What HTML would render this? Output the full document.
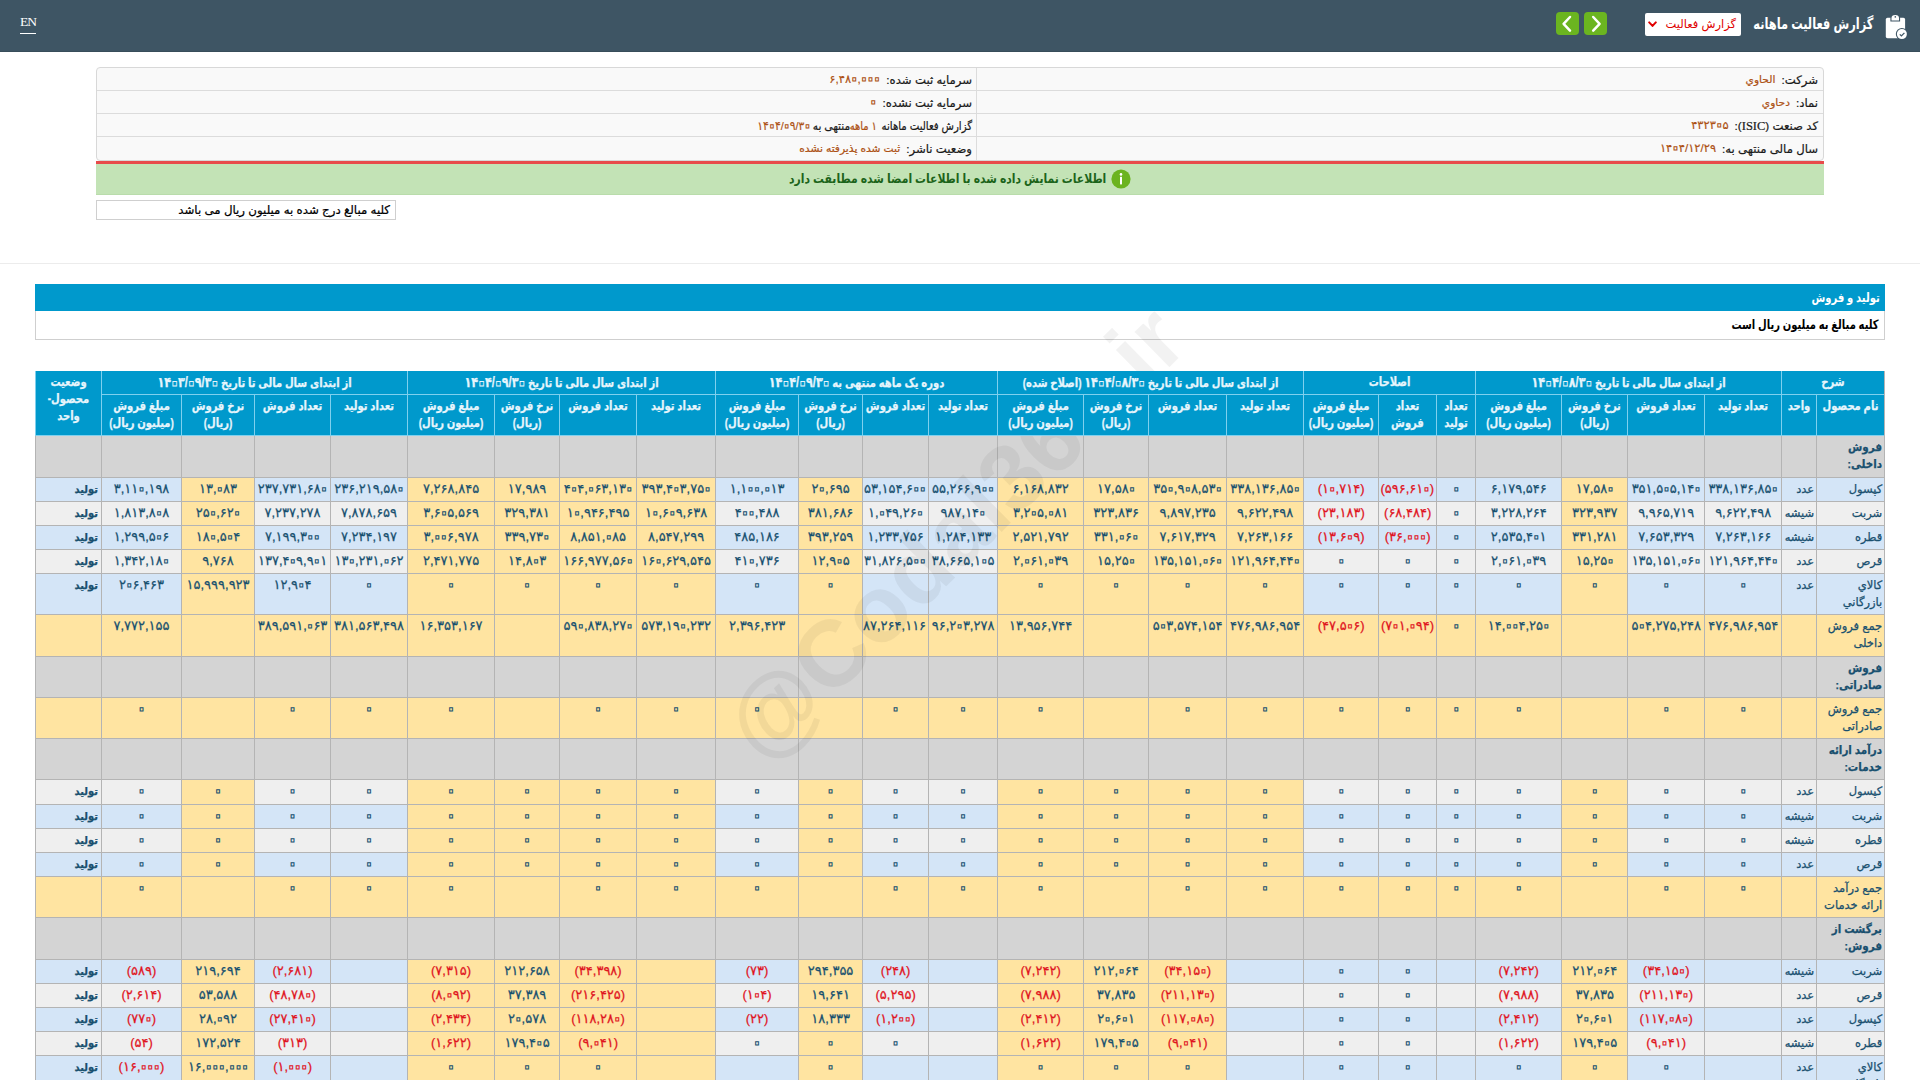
<!DOCTYPE html>
<html lang="fa">
<head>
<meta charset="utf-8">
<title>گزارش فعالیت ماهانه</title>
<style>
html,body{margin:0;padding:0;background:#fff;overflow:hidden;}
body{width:1920px;height:1080px;overflow:hidden;position:relative;font-family:"Liberation Sans","DejaVu Sans",sans-serif;font-size:11px;color:#000;}
.abs{position:absolute;}
#top{left:0;top:0;width:1920px;height:52px;background:#3e5564;border-bottom:1px solid #384d5a;box-sizing:border-box;}
#en{left:20px;top:13.5px;color:#fff;font-family:"Liberation Serif",serif;font-size:13.5px;line-height:15px;letter-spacing:-0.9px;}
#enl{left:20px;top:33px;width:16px;height:1px;background:#fff;}
#title{right:47px;top:13px;color:#fff;font-weight:bold;font-size:15.5px;line-height:22px;direction:rtl;white-space:nowrap;transform:scaleX(0.735);transform-origin:right center;}
#dd{left:1645px;top:13px;width:96px;height:23px;background:#fff;border-radius:2px;}
#ddt{right:5px;top:0;line-height:22px;color:#e00000;font-size:11.5px;direction:rtl;white-space:nowrap;}
.gb{top:12px;width:23px;height:23px;background:#6bb520;border-radius:4px;}
#info{left:96px;top:67px;width:1728px;height:94px;background:#f9f9f9;border:1px solid #d8d8d8;border-radius:4px;box-sizing:border-box;overflow:hidden;-webkit-text-stroke:0.2px;}
.ir{position:absolute;left:-1px;width:1728px;height:23px;border-bottom:1px solid #dcdcdc;box-sizing:border-box;}
.ic{position:absolute;top:0;height:22px;line-height:23px;color:#1a1a1a;direction:rtl;white-space:nowrap;font-size:11.7px;}
.ic b{font-weight:normal;color:#ad5215;margin-right:6px;font-size:11.5px;position:relative;top:-1px;}
.ic b.tx{font-size:10.7px;}
.ic i{font-style:normal;color:#ad5215;}
.p3{transform-origin:right center;}
#red{left:96px;top:161px;width:1728px;height:3px;background:#e84b4b;}
#green{left:96px;top:164px;width:1728px;height:31px;background:#c3e3b6;border-bottom:1px solid #b9dcab;box-sizing:border-box;}
#gt{right:718px;top:0;direction:rtl;line-height:29px;color:#1c641a;font-weight:bold;font-size:13px;transform:scaleX(0.832);white-space:nowrap;transform-origin:right center;}
#note{-webkit-text-stroke:0.2px;left:96px;top:200px;width:300px;height:20px;border:1px solid #cfcfcf;box-sizing:border-box;direction:rtl;text-align:right;padding-right:5px;line-height:19px;font-size:11.8px;white-space:nowrap;}
#hr{left:0;top:263px;width:1920px;height:1px;background:#ececec;}
#sh{left:35px;top:284px;width:1850px;height:27px;background:#0099cc;color:#fff;font-weight:bold;font-size:12px;direction:rtl;line-height:27px;box-sizing:border-box;padding-right:5px;}
#sh span,#sn span{display:inline-block;font-size:13px;transform:scaleX(0.768);transform-origin:right center;white-space:nowrap;}
#sn{left:35px;top:311px;width:1850px;height:29px;border:1px solid #cfcfcf;border-top:none;box-sizing:border-box;direction:rtl;line-height:27px;padding-right:5px;font-weight:bold;font-size:12px;color:#000;}
#tw{left:35px;top:371px;width:1850px;}
table.t{-webkit-text-stroke:0.25px;border-collapse:separate;border-spacing:0;table-layout:fixed;width:1850px;border-right:1px solid #b4b4b4;font-size:11px;color:#19506f;}
table.t th,table.t td{box-sizing:border-box;padding:3px 2px 0 2px;vertical-align:top;text-align:center;line-height:17px;overflow:hidden;}
table.t th{position:relative;z-index:3;background:#0099cc;color:#e6f5fc;font-weight:bold;border-left:1px solid #7fd0ee;border-bottom:1px solid #7fd0ee;font-size:12.5px;white-space:nowrap;overflow:visible;}
table.t th .hs{display:block;margin:0 -40px;transform:scaleX(0.80);}
table.t th .d{font-size:14px;}
.z{font-size:27px;line-height:0;margin:0 -4px;vertical-align:-3.7px;-webkit-text-stroke:1px currentColor;-webkit-text-fill-color:transparent;}
table.t td.v{font-size:13px;padding-top:2px;color:#17506f;}
table.t td{border-left:1px solid #b4b4b4;border-bottom:1px solid #b4b4b4;white-space:nowrap;}
table.t td.nm{text-align:right;white-space:normal;padding-right:2px;font-size:11.5px;}
table.t td.st{text-align:right;padding-right:3px;}
table.t td.un{text-align:right;padding-right:2px;font-size:11.5px;}
tr.s td{background:#d4d4d4;}
tr.s td.nm{font-weight:bold;}
td.st{font-weight:bold;}
.bs{display:inline-block;transform:scaleX(0.9);transform-origin:right center;}
tr.y td,td.y{background:#ffe4a1;}
td.b{background:#d4e5f7;}
td.g{background:#efefef;}
table.t td.n{color:#e0141e;}
#wm{left:955px;top:533px;width:0;height:0;}
#wmt{position:absolute;left:-400px;top:-60px;width:800px;height:120px;line-height:120px;text-align:center;font-size:94px;font-weight:bold;color:rgba(0,0,0,0.05);transform:rotate(-44.5deg);font-family:"Liberation Sans",sans-serif;white-space:nowrap;}
</style>
</head>
<body>
<div id="top" class="abs">
  <div id="en" class="abs">EN</div><div id="enl" class="abs"></div>
  <div class="abs gb" style="left:1556px"><svg width="23" height="23" viewBox="0 0 23 23"><path d="M14 5 L7.6 11.8 L14 18.6" fill="none" stroke="#fff" stroke-width="2.5" stroke-linecap="round" stroke-linejoin="round"/></svg></div>
  <div class="abs gb" style="left:1584px"><svg width="23" height="23" viewBox="0 0 23 23"><path d="M9.2 5 L15.6 11.8 L9.2 18.6" fill="none" stroke="#fff" stroke-width="2.5" stroke-linecap="round" stroke-linejoin="round"/></svg></div>
  <div id="dd" class="abs"><div id="ddt" class="abs">گزارش فعالیت</div><svg class="abs" style="left:3px;top:8px" width="9" height="7" viewBox="0 0 9 7"><path d="M1.2 1.4 L4.5 4.9 L7.8 1.4" fill="none" stroke="#e00000" stroke-width="2" stroke-linecap="round" stroke-linejoin="round"/></svg></div>
  <div id="title" class="abs">گزارش فعالیت ماهانه</div>
  <svg class="abs" style="left:1880px;top:10px" width="32" height="32" viewBox="0 0 32 32"><rect x="5.8" y="7.8" width="19.3" height="20.4" rx="1.7" fill="#fff"/><path d="M10.4 11.6 V8 a4.85 4.2 0 0 1 9.7 0 V11.6 z" fill="#3e5564"/><path d="M11.5 10.5 V8 a3.75 3.1 0 0 1 7.5 0 V10.5 z" fill="#fff"/><circle cx="15.3" cy="6.9" r="0.8" fill="#3e5564"/><circle cx="21.9" cy="24.1" r="6.1" fill="#3e5564"/><circle cx="21.9" cy="24.1" r="5" fill="#fff"/><path d="M19.8 24.4 L21.4 25.9 L24.4 22.9" fill="none" stroke="#3e5564" stroke-width="1.3"/></svg>
</div>

<div id="info" class="abs">
  <div class="ir" style="top:0"><div class="ic" style="right:6px">شرکت:<b class="tx">الحاوي</b></div><div class="ic" style="right:852px">سرمایه ثبت شده:<b>۶,۴۸<span class="z">۰</span>,<span class="z">۰</span><span class="z">۰</span><span class="z">۰</span></b></div></div>
  <div class="ir" style="top:23px"><div class="ic" style="right:6px">نماد:<b class="tx">دحاوي</b></div><div class="ic" style="right:852px">سرمایه ثبت نشده:<b><span class="z">۰</span></b></div></div>
  <div class="ir" style="top:46px"><div class="ic" style="right:6px">کد صنعت (<span style="font-family:'Liberation Serif',serif;font-size:12.5px">ISIC</span>):<b>۴۳۲۳<span class="z">۰</span>۵</b></div><div class="ic p3" id="p3_1" style="transform:scaleX(0.870);right:852.0px;">گزارش فعالیت ماهانه</div><div class="ic p3" id="p3_2" style="transform:scaleX(0.853);right:947.1px;color:#ad5215;">۱ ماهه</div><div class="ic p3" id="p3_3" style="transform:scaleX(0.910);right:974.2px;">منتهی به</div><div class="ic p3" id="p3_4" style="transform:scaleX(0.927);right:1013.4px;color:#ad5215;">۱۴<span class="z">۰</span>۴/<span class="z">۰</span>۹/۳<span class="z">۰</span></div></div>
  <div class="ir" style="top:69px;border-bottom:none"><div class="ic" style="right:6px">سال مالی منتهی به:<b>۱۴<span class="z">۰</span>۴/۱۲/۲۹</b></div><div class="ic" style="right:852px">وضعیت ناشر:<b class="tx">ثبت شده پذیرفته نشده</b></div></div>
  <div class="abs" style="left:879px;top:0;width:1px;height:93px;background:#dcdcdc"></div>
</div>
<div id="red" class="abs"></div>
<div id="green" class="abs"><svg class="abs" style="left:1015px;top:5px" width="20" height="20" viewBox="0 0 20 20"><circle cx="10" cy="10" r="9.6" fill="#6bb31f"/><circle cx="10" cy="5.4" r="1.3" fill="#fff"/><rect x="9" y="7.8" width="2" height="7.6" fill="#fff"/></svg><div id="gt" class="abs">اطلاعات نمایش داده شده با اطلاعات امضا شده مطابقت دارد</div></div>
<div id="note" class="abs">کلیه مبالغ درج شده به میلیون ریال می باشد</div>
<div id="hr" class="abs"></div>
<div id="sh" class="abs"><span>تولید و فروش</span></div>
<div id="sn" class="abs"><span>کلیه مبالغ به میلیون ریال است</span></div>
<div id="tw" class="abs">
<table class="t" dir="rtl"><colgroup><col style="width:68px"><col style="width:35px"><col style="width:77px"><col style="width:77px"><col style="width:66px"><col style="width:86px"><col style="width:39px"><col style="width:58px"><col style="width:75px"><col style="width:77px"><col style="width:78px"><col style="width:65px"><col style="width:86px"><col style="width:69px"><col style="width:66px"><col style="width:64px"><col style="width:83px"><col style="width:79px"><col style="width:77px"><col style="width:65px"><col style="width:87px"><col style="width:77px"><col style="width:76px"><col style="width:73px"><col style="width:80px"><col style="width:66px"></colgroup>
<tr class="h1" style="height:24px"><th colspan="2"><span class="hs">شرح</span></th><th colspan="4"><span class="hs">از ابتدای سال مالی تا تاریخ <span class="d">۱۴<span class="z">۰</span>۴/<span class="z">۰</span>۸/۳<span class="z">۰</span></span></span></th><th colspan="3"><span class="hs">اصلاحات</span></th><th colspan="4"><span class="hs">از ابتدای سال مالی تا تاریخ <span class="d">۱۴<span class="z">۰</span>۴/<span class="z">۰</span>۸/۳<span class="z">۰</span></span> (اصلاح شده)</span></th><th colspan="4"><span class="hs">دوره یک ماهه منتهی به <span class="d">۱۴<span class="z">۰</span>۴/<span class="z">۰</span>۹/۳<span class="z">۰</span></span></span></th><th colspan="4"><span class="hs">از ابتدای سال مالی تا تاریخ <span class="d">۱۴<span class="z">۰</span>۴/<span class="z">۰</span>۹/۳<span class="z">۰</span></span></span></th><th colspan="4"><span class="hs">از ابتدای سال مالی تا تاریخ <span class="d">۱۴<span class="z">۰</span>۳/<span class="z">۰</span>۹/۳<span class="z">۰</span></span></span></th><th rowspan="2"><span class="hs">وضعیت<br>محصول-<br>واحد</span></th></tr>
<tr class="h2" style="height:41px"><th><span class="hs">نام محصول</span></th><th><span class="hs">واحد</span></th><th><span class="hs">تعداد تولید</span></th><th><span class="hs">تعداد فروش</span></th><th><span class="hs">نرخ فروش<br>(ریال)</span></th><th><span class="hs">مبلغ فروش<br>(میلیون ریال)</span></th><th><span class="hs">تعداد<br>تولید</span></th><th><span class="hs">تعداد<br>فروش</span></th><th><span class="hs">مبلغ فروش<br>(میلیون ریال)</span></th><th><span class="hs">تعداد تولید</span></th><th><span class="hs">تعداد فروش</span></th><th><span class="hs">نرخ فروش<br>(ریال)</span></th><th><span class="hs">مبلغ فروش<br>(میلیون ریال)</span></th><th><span class="hs">تعداد تولید</span></th><th><span class="hs">تعداد فروش</span></th><th><span class="hs">نرخ فروش<br>(ریال)</span></th><th><span class="hs">مبلغ فروش<br>(میلیون ریال)</span></th><th><span class="hs">تعداد تولید</span></th><th><span class="hs">تعداد فروش</span></th><th><span class="hs">نرخ فروش<br>(ریال)</span></th><th><span class="hs">مبلغ فروش<br>(میلیون ریال)</span></th><th><span class="hs">تعداد تولید</span></th><th><span class="hs">تعداد فروش</span></th><th><span class="hs">نرخ فروش<br>(ریال)</span></th><th><span class="hs">مبلغ فروش<br>(میلیون ریال)</span></th></tr>
<tr class="s" style="height:42px"><td class="nm"><span class="bs">فروش داخلی:</span></td><td></td><td></td><td></td><td></td><td></td><td></td><td></td><td></td><td></td><td></td><td></td><td></td><td></td><td></td><td></td><td></td><td></td><td></td><td></td><td></td><td></td><td></td><td></td><td></td><td></td></tr>
<tr style="height:24px"><td class="nm b">کپسول</td><td class="un b">عدد</td><td class="b v">۳۳۸,۱۳۶,۸۵<span class="z">۰</span></td><td class="b v">۳۵۱,۵<span class="z">۰</span>۵,۱۴<span class="z">۰</span></td><td class="y v">۱۷,۵۸<span class="z">۰</span></td><td class="b v">۶,۱۷۹,۵۴۶</td><td class="b v"><span class="z">۰</span></td><td class="b n v">(۵۹۶,۶۱<span class="z">۰</span>)</td><td class="b n v">(۱<span class="z">۰</span>,۷۱۴)</td><td class="y v">۳۳۸,۱۳۶,۸۵<span class="z">۰</span></td><td class="y v">۳۵<span class="z">۰</span>,۹<span class="z">۰</span>۸,۵۳<span class="z">۰</span></td><td class="y v">۱۷,۵۸<span class="z">۰</span></td><td class="y v">۶,۱۶۸,۸۳۲</td><td class="b v">۵۵,۲۶۶,۹<span class="z">۰</span><span class="z">۰</span></td><td class="b v">۵۳,۱۵۴,۶<span class="z">۰</span><span class="z">۰</span></td><td class="y v">۲<span class="z">۰</span>,۶۹۵</td><td class="b v">۱,۱<span class="z">۰</span><span class="z">۰</span>,<span class="z">۰</span>۱۳</td><td class="y v">۳۹۳,۴<span class="z">۰</span>۳,۷۵<span class="z">۰</span></td><td class="y v">۴<span class="z">۰</span>۴,<span class="z">۰</span>۶۳,۱۳<span class="z">۰</span></td><td class="y v">۱۷,۹۸۹</td><td class="y v">۷,۲۶۸,۸۴۵</td><td class="b v">۲۳۶,۲۱۹,۵۸<span class="z">۰</span></td><td class="b v">۲۳۷,۷۳۱,۶۸<span class="z">۰</span></td><td class="y v">۱۳,<span class="z">۰</span>۸۳</td><td class="b v">۳,۱۱<span class="z">۰</span>,۱۹۸</td><td class="st b"><span class="bs">تولید</span></td></tr>
<tr style="height:24px"><td class="nm g">شربت</td><td class="un g">شیشه</td><td class="g v">۹,۶۲۲,۴۹۸</td><td class="g v">۹,۹۶۵,۷۱۹</td><td class="y v">۳۲۳,۹۳۷</td><td class="g v">۳,۲۲۸,۲۶۴</td><td class="g v"><span class="z">۰</span></td><td class="g n v">(۶۸,۴۸۴)</td><td class="g n v">(۲۳,۱۸۳)</td><td class="y v">۹,۶۲۲,۴۹۸</td><td class="y v">۹,۸۹۷,۲۳۵</td><td class="y v">۳۲۳,۸۳۶</td><td class="y v">۳,۲<span class="z">۰</span>۵,<span class="z">۰</span>۸۱</td><td class="g v">۹۸۷,۱۴<span class="z">۰</span></td><td class="g v">۱,<span class="z">۰</span>۴۹,۲۶<span class="z">۰</span></td><td class="y v">۳۸۱,۶۸۶</td><td class="g v">۴<span class="z">۰</span><span class="z">۰</span>,۴۸۸</td><td class="y v">۱<span class="z">۰</span>,۶<span class="z">۰</span>۹,۶۳۸</td><td class="y v">۱<span class="z">۰</span>,۹۴۶,۴۹۵</td><td class="y v">۳۲۹,۳۸۱</td><td class="y v">۳,۶<span class="z">۰</span>۵,۵۶۹</td><td class="g v">۷,۸۷۸,۶۵۹</td><td class="g v">۷,۲۳۷,۲۷۸</td><td class="y v">۲۵<span class="z">۰</span>,۶۲<span class="z">۰</span></td><td class="g v">۱,۸۱۳,۸<span class="z">۰</span>۸</td><td class="st g"><span class="bs">تولید</span></td></tr>
<tr style="height:24px"><td class="nm b">قطره</td><td class="un b">شیشه</td><td class="b v">۷,۲۶۳,۱۶۶</td><td class="b v">۷,۶۵۳,۳۲۹</td><td class="y v">۳۳۱,۲۸۱</td><td class="b v">۲,۵۳۵,۴<span class="z">۰</span>۱</td><td class="b v"><span class="z">۰</span></td><td class="b n v">(۳۶,<span class="z">۰</span><span class="z">۰</span><span class="z">۰</span>)</td><td class="b n v">(۱۳,۶<span class="z">۰</span>۹)</td><td class="y v">۷,۲۶۳,۱۶۶</td><td class="y v">۷,۶۱۷,۳۲۹</td><td class="y v">۳۳۱,<span class="z">۰</span>۶<span class="z">۰</span></td><td class="y v">۲,۵۲۱,۷۹۲</td><td class="b v">۱,۲۸۴,۱۳۳</td><td class="b v">۱,۲۳۳,۷۵۶</td><td class="y v">۳۹۳,۲۵۹</td><td class="b v">۴۸۵,۱۸۶</td><td class="y v">۸,۵۴۷,۲۹۹</td><td class="y v">۸,۸۵۱,<span class="z">۰</span>۸۵</td><td class="y v">۳۳۹,۷۳<span class="z">۰</span></td><td class="y v">۳,<span class="z">۰</span><span class="z">۰</span>۶,۹۷۸</td><td class="b v">۷,۲۳۴,۱۹۷</td><td class="b v">۷,۱۹۹,۳<span class="z">۰</span><span class="z">۰</span></td><td class="y v">۱۸<span class="z">۰</span>,۵<span class="z">۰</span>۴</td><td class="b v">۱,۲۹۹,۵<span class="z">۰</span>۶</td><td class="st b"><span class="bs">تولید</span></td></tr>
<tr style="height:24px"><td class="nm g">قرص</td><td class="un g">عدد</td><td class="g v">۱۲۱,۹۶۴,۴۴<span class="z">۰</span></td><td class="g v">۱۳۵,۱۵۱,<span class="z">۰</span>۶<span class="z">۰</span></td><td class="y v">۱۵,۲۵<span class="z">۰</span></td><td class="g v">۲,<span class="z">۰</span>۶۱,<span class="z">۰</span>۳۹</td><td class="g v"><span class="z">۰</span></td><td class="g v"><span class="z">۰</span></td><td class="g v"><span class="z">۰</span></td><td class="y v">۱۲۱,۹۶۴,۴۴<span class="z">۰</span></td><td class="y v">۱۳۵,۱۵۱,<span class="z">۰</span>۶<span class="z">۰</span></td><td class="y v">۱۵,۲۵<span class="z">۰</span></td><td class="y v">۲,<span class="z">۰</span>۶۱,<span class="z">۰</span>۳۹</td><td class="g v">۳۸,۶۶۵,۱<span class="z">۰</span>۵</td><td class="g v">۳۱,۸۲۶,۵<span class="z">۰</span><span class="z">۰</span></td><td class="y v">۱۲,۹<span class="z">۰</span>۵</td><td class="g v">۴۱<span class="z">۰</span>,۷۳۶</td><td class="y v">۱۶<span class="z">۰</span>,۶۲۹,۵۴۵</td><td class="y v">۱۶۶,۹۷۷,۵۶<span class="z">۰</span></td><td class="y v">۱۴,۸<span class="z">۰</span>۳</td><td class="y v">۲,۴۷۱,۷۷۵</td><td class="g v">۱۳<span class="z">۰</span>,۲۳۱,<span class="z">۰</span>۶۲</td><td class="g v">۱۳۷,۴<span class="z">۰</span>۹,۹<span class="z">۰</span>۱</td><td class="y v">۹,۷۶۸</td><td class="g v">۱,۳۴۲,۱۸<span class="z">۰</span></td><td class="st g"><span class="bs">تولید</span></td></tr>
<tr style="height:41px"><td class="nm b">کالاي بازرگاني</td><td class="un b">عدد</td><td class="b v"><span class="z">۰</span></td><td class="b v"><span class="z">۰</span></td><td class="y v"><span class="z">۰</span></td><td class="b v"><span class="z">۰</span></td><td class="b v"><span class="z">۰</span></td><td class="b v"><span class="z">۰</span></td><td class="b v"><span class="z">۰</span></td><td class="y v"><span class="z">۰</span></td><td class="y v"><span class="z">۰</span></td><td class="y v"><span class="z">۰</span></td><td class="y v"><span class="z">۰</span></td><td class="b v"></td><td class="b v"></td><td class="y v"><span class="z">۰</span></td><td class="b v"><span class="z">۰</span></td><td class="y v"><span class="z">۰</span></td><td class="y v"><span class="z">۰</span></td><td class="y v"><span class="z">۰</span></td><td class="y v"><span class="z">۰</span></td><td class="b v"><span class="z">۰</span></td><td class="b v">۱۲,۹<span class="z">۰</span>۴</td><td class="y v">۱۵,۹۹۹,۹۲۳</td><td class="b v">۲<span class="z">۰</span>۶,۴۶۳</td><td class="st b"><span class="bs">تولید</span></td></tr>
<tr class="y" style="height:42px"><td class="nm">جمع فروش داخلی</td><td></td><td class="v">۴۷۶,۹۸۶,۹۵۴</td><td class="v">۵<span class="z">۰</span>۴,۲۷۵,۲۴۸</td><td class="v"></td><td class="v">۱۴,<span class="z">۰</span><span class="z">۰</span>۴,۲۵<span class="z">۰</span></td><td class="v"><span class="z">۰</span></td><td class="n v">(۷<span class="z">۰</span>۱,<span class="z">۰</span>۹۴)</td><td class="n v">(۴۷,۵<span class="z">۰</span>۶)</td><td class="v">۴۷۶,۹۸۶,۹۵۴</td><td class="v">۵<span class="z">۰</span>۳,۵۷۴,۱۵۴</td><td class="v"></td><td class="v">۱۳,۹۵۶,۷۴۴</td><td class="v">۹۶,۲<span class="z">۰</span>۳,۲۷۸</td><td class="v">۸۷,۲۶۴,۱۱۶</td><td class="v"></td><td class="v">۲,۳۹۶,۴۲۳</td><td class="v">۵۷۳,۱۹<span class="z">۰</span>,۲۳۲</td><td class="v">۵۹<span class="z">۰</span>,۸۳۸,۲۷<span class="z">۰</span></td><td class="v"></td><td class="v">۱۶,۳۵۳,۱۶۷</td><td class="v">۳۸۱,۵۶۳,۴۹۸</td><td class="v">۳۸۹,۵۹۱,<span class="z">۰</span>۶۳</td><td class="v"></td><td class="v">۷,۷۷۲,۱۵۵</td><td></td></tr>
<tr class="s" style="height:41px"><td class="nm"><span class="bs">فروش صادراتی:</span></td><td></td><td></td><td></td><td></td><td></td><td></td><td></td><td></td><td></td><td></td><td></td><td></td><td></td><td></td><td></td><td></td><td></td><td></td><td></td><td></td><td></td><td></td><td></td><td></td><td></td></tr>
<tr class="y" style="height:41px"><td class="nm">جمع فروش صادراتی</td><td></td><td class="v"><span class="z">۰</span></td><td class="v"><span class="z">۰</span></td><td class="v"></td><td class="v"><span class="z">۰</span></td><td class="v"><span class="z">۰</span></td><td class="v"><span class="z">۰</span></td><td class="v"><span class="z">۰</span></td><td class="v"><span class="z">۰</span></td><td class="v"><span class="z">۰</span></td><td class="v"></td><td class="v"><span class="z">۰</span></td><td class="v"><span class="z">۰</span></td><td class="v"><span class="z">۰</span></td><td class="v"></td><td class="v"><span class="z">۰</span></td><td class="v"><span class="z">۰</span></td><td class="v"><span class="z">۰</span></td><td class="v"></td><td class="v"><span class="z">۰</span></td><td class="v"><span class="z">۰</span></td><td class="v"><span class="z">۰</span></td><td class="v"></td><td class="v"><span class="z">۰</span></td><td></td></tr>
<tr class="s" style="height:41px"><td class="nm"><span class="bs">درآمد ارائه خدمات:</span></td><td></td><td></td><td></td><td></td><td></td><td></td><td></td><td></td><td></td><td></td><td></td><td></td><td></td><td></td><td></td><td></td><td></td><td></td><td></td><td></td><td></td><td></td><td></td><td></td><td></td></tr>
<tr style="height:25px"><td class="nm g">کپسول</td><td class="un g">عدد</td><td class="g v"><span class="z">۰</span></td><td class="g v"><span class="z">۰</span></td><td class="y v"><span class="z">۰</span></td><td class="g v"><span class="z">۰</span></td><td class="g v"><span class="z">۰</span></td><td class="g v"><span class="z">۰</span></td><td class="g v"><span class="z">۰</span></td><td class="y v"><span class="z">۰</span></td><td class="y v"><span class="z">۰</span></td><td class="y v"><span class="z">۰</span></td><td class="y v"><span class="z">۰</span></td><td class="g v"><span class="z">۰</span></td><td class="g v"><span class="z">۰</span></td><td class="y v"><span class="z">۰</span></td><td class="g v"><span class="z">۰</span></td><td class="y v"><span class="z">۰</span></td><td class="y v"><span class="z">۰</span></td><td class="y v"><span class="z">۰</span></td><td class="y v"><span class="z">۰</span></td><td class="g v"><span class="z">۰</span></td><td class="g v"><span class="z">۰</span></td><td class="y v"><span class="z">۰</span></td><td class="g v"><span class="z">۰</span></td><td class="st g"><span class="bs">تولید</span></td></tr>
<tr style="height:24px"><td class="nm b">شربت</td><td class="un b">شیشه</td><td class="b v"><span class="z">۰</span></td><td class="b v"><span class="z">۰</span></td><td class="y v"><span class="z">۰</span></td><td class="b v"><span class="z">۰</span></td><td class="b v"><span class="z">۰</span></td><td class="b v"><span class="z">۰</span></td><td class="b v"><span class="z">۰</span></td><td class="y v"><span class="z">۰</span></td><td class="y v"><span class="z">۰</span></td><td class="y v"><span class="z">۰</span></td><td class="y v"><span class="z">۰</span></td><td class="b v"><span class="z">۰</span></td><td class="b v"><span class="z">۰</span></td><td class="y v"><span class="z">۰</span></td><td class="b v"><span class="z">۰</span></td><td class="y v"><span class="z">۰</span></td><td class="y v"><span class="z">۰</span></td><td class="y v"><span class="z">۰</span></td><td class="y v"><span class="z">۰</span></td><td class="b v"><span class="z">۰</span></td><td class="b v"><span class="z">۰</span></td><td class="y v"><span class="z">۰</span></td><td class="b v"><span class="z">۰</span></td><td class="st b"><span class="bs">تولید</span></td></tr>
<tr style="height:24px"><td class="nm g">قطره</td><td class="un g">شیشه</td><td class="g v"><span class="z">۰</span></td><td class="g v"><span class="z">۰</span></td><td class="y v"><span class="z">۰</span></td><td class="g v"><span class="z">۰</span></td><td class="g v"><span class="z">۰</span></td><td class="g v"><span class="z">۰</span></td><td class="g v"><span class="z">۰</span></td><td class="y v"><span class="z">۰</span></td><td class="y v"><span class="z">۰</span></td><td class="y v"><span class="z">۰</span></td><td class="y v"><span class="z">۰</span></td><td class="g v"><span class="z">۰</span></td><td class="g v"><span class="z">۰</span></td><td class="y v"><span class="z">۰</span></td><td class="g v"><span class="z">۰</span></td><td class="y v"><span class="z">۰</span></td><td class="y v"><span class="z">۰</span></td><td class="y v"><span class="z">۰</span></td><td class="y v"><span class="z">۰</span></td><td class="g v"><span class="z">۰</span></td><td class="g v"><span class="z">۰</span></td><td class="y v"><span class="z">۰</span></td><td class="g v"><span class="z">۰</span></td><td class="st g"><span class="bs">تولید</span></td></tr>
<tr style="height:24px"><td class="nm b">قرص</td><td class="un b">عدد</td><td class="b v"><span class="z">۰</span></td><td class="b v"><span class="z">۰</span></td><td class="y v"><span class="z">۰</span></td><td class="b v"><span class="z">۰</span></td><td class="b v"><span class="z">۰</span></td><td class="b v"><span class="z">۰</span></td><td class="b v"><span class="z">۰</span></td><td class="y v"><span class="z">۰</span></td><td class="y v"><span class="z">۰</span></td><td class="y v"><span class="z">۰</span></td><td class="y v"><span class="z">۰</span></td><td class="b v"><span class="z">۰</span></td><td class="b v"><span class="z">۰</span></td><td class="y v"><span class="z">۰</span></td><td class="b v"><span class="z">۰</span></td><td class="y v"><span class="z">۰</span></td><td class="y v"><span class="z">۰</span></td><td class="y v"><span class="z">۰</span></td><td class="y v"><span class="z">۰</span></td><td class="b v"><span class="z">۰</span></td><td class="b v"><span class="z">۰</span></td><td class="y v"><span class="z">۰</span></td><td class="b v"><span class="z">۰</span></td><td class="st b"><span class="bs">تولید</span></td></tr>
<tr class="y" style="height:41px"><td class="nm">جمع درآمد ارائه خدمات</td><td></td><td class="v"><span class="z">۰</span></td><td class="v"><span class="z">۰</span></td><td class="v"></td><td class="v"><span class="z">۰</span></td><td class="v"><span class="z">۰</span></td><td class="v"><span class="z">۰</span></td><td class="v"><span class="z">۰</span></td><td class="v"><span class="z">۰</span></td><td class="v"><span class="z">۰</span></td><td class="v"></td><td class="v"><span class="z">۰</span></td><td class="v"><span class="z">۰</span></td><td class="v"><span class="z">۰</span></td><td class="v"></td><td class="v"><span class="z">۰</span></td><td class="v"><span class="z">۰</span></td><td class="v"><span class="z">۰</span></td><td class="v"></td><td class="v"><span class="z">۰</span></td><td class="v"><span class="z">۰</span></td><td class="v"><span class="z">۰</span></td><td class="v"></td><td class="v"><span class="z">۰</span></td><td></td></tr>
<tr class="s" style="height:42px"><td class="nm"><span class="bs">برگشت از فروش:</span></td><td></td><td></td><td></td><td></td><td></td><td></td><td></td><td></td><td></td><td></td><td></td><td></td><td></td><td></td><td></td><td></td><td></td><td></td><td></td><td></td><td></td><td></td><td></td><td></td><td></td></tr>
<tr style="height:24px"><td class="nm b">شربت</td><td class="un b">شیشه</td><td class="b v"></td><td class="b n v">(۳۴,۱۵<span class="z">۰</span>)</td><td class="y v">۲۱۲,<span class="z">۰</span>۶۴</td><td class="b n v">(۷,۲۴۲)</td><td class="b v"></td><td class="b v"><span class="z">۰</span></td><td class="b v"><span class="z">۰</span></td><td class="b v"></td><td class="y n v">(۳۴,۱۵<span class="z">۰</span>)</td><td class="y v">۲۱۲,<span class="z">۰</span>۶۴</td><td class="y n v">(۷,۲۴۲)</td><td class="b v"></td><td class="b n v">(۲۴۸)</td><td class="y v">۲۹۴,۳۵۵</td><td class="b n v">(۷۳)</td><td class="y v"></td><td class="y n v">(۳۴,۳۹۸)</td><td class="y v">۲۱۲,۶۵۸</td><td class="y n v">(۷,۳۱۵)</td><td class="b v"></td><td class="b n v">(۲,۶۸۱)</td><td class="y v">۲۱۹,۶۹۴</td><td class="b n v">(۵۸۹)</td><td class="st b"><span class="bs">تولید</span></td></tr>
<tr style="height:24px"><td class="nm g">قرص</td><td class="un g">عدد</td><td class="g v"></td><td class="g n v">(۲۱۱,۱۳<span class="z">۰</span>)</td><td class="y v">۳۷,۸۳۵</td><td class="g n v">(۷,۹۸۸)</td><td class="g v"></td><td class="g v"><span class="z">۰</span></td><td class="g v"><span class="z">۰</span></td><td class="g v"></td><td class="y n v">(۲۱۱,۱۳<span class="z">۰</span>)</td><td class="y v">۳۷,۸۳۵</td><td class="y n v">(۷,۹۸۸)</td><td class="g v"></td><td class="g n v">(۵,۲۹۵)</td><td class="y v">۱۹,۶۴۱</td><td class="g n v">(۱<span class="z">۰</span>۴)</td><td class="y v"></td><td class="y n v">(۲۱۶,۴۲۵)</td><td class="y v">۳۷,۳۸۹</td><td class="y n v">(۸,<span class="z">۰</span>۹۲)</td><td class="g v"></td><td class="g n v">(۴۸,۷۸<span class="z">۰</span>)</td><td class="y v">۵۳,۵۸۸</td><td class="g n v">(۲,۶۱۴)</td><td class="st g"><span class="bs">تولید</span></td></tr>
<tr style="height:24px"><td class="nm b">کپسول</td><td class="un b">عدد</td><td class="b v"></td><td class="b n v">(۱۱۷,<span class="z">۰</span>۸<span class="z">۰</span>)</td><td class="y v">۲<span class="z">۰</span>,۶<span class="z">۰</span>۱</td><td class="b n v">(۲,۴۱۲)</td><td class="b v"></td><td class="b v"><span class="z">۰</span></td><td class="b v"><span class="z">۰</span></td><td class="b v"></td><td class="y n v">(۱۱۷,<span class="z">۰</span>۸<span class="z">۰</span>)</td><td class="y v">۲<span class="z">۰</span>,۶<span class="z">۰</span>۱</td><td class="y n v">(۲,۴۱۲)</td><td class="b v"></td><td class="b n v">(۱,۲<span class="z">۰</span><span class="z">۰</span>)</td><td class="y v">۱۸,۳۳۳</td><td class="b n v">(۲۲)</td><td class="y v"></td><td class="y n v">(۱۱۸,۲۸<span class="z">۰</span>)</td><td class="y v">۲<span class="z">۰</span>,۵۷۸</td><td class="y n v">(۲,۴۳۴)</td><td class="b v"></td><td class="b n v">(۲۷,۴۱<span class="z">۰</span>)</td><td class="y v">۲۸,<span class="z">۰</span>۹۲</td><td class="b n v">(۷۷<span class="z">۰</span>)</td><td class="st b"><span class="bs">تولید</span></td></tr>
<tr style="height:24px"><td class="nm g">قطره</td><td class="un g">شیشه</td><td class="g v"></td><td class="g n v">(۹,<span class="z">۰</span>۴۱)</td><td class="y v">۱۷۹,۴<span class="z">۰</span>۵</td><td class="g n v">(۱,۶۲۲)</td><td class="g v"></td><td class="g v"><span class="z">۰</span></td><td class="g v"><span class="z">۰</span></td><td class="g v"></td><td class="y n v">(۹,<span class="z">۰</span>۴۱)</td><td class="y v">۱۷۹,۴<span class="z">۰</span>۵</td><td class="y n v">(۱,۶۲۲)</td><td class="g v"></td><td class="g v"><span class="z">۰</span></td><td class="y v"><span class="z">۰</span></td><td class="g v"><span class="z">۰</span></td><td class="y v"></td><td class="y n v">(۹,<span class="z">۰</span>۴۱)</td><td class="y v">۱۷۹,۴<span class="z">۰</span>۵</td><td class="y n v">(۱,۶۲۲)</td><td class="g v"></td><td class="g n v">(۳۱۳)</td><td class="y v">۱۷۲,۵۲۴</td><td class="g n v">(۵۴)</td><td class="st g"><span class="bs">تولید</span></td></tr>
<tr style="height:41px"><td class="nm b">کالاي بازرگاني</td><td class="un b">عدد</td><td class="b v"></td><td class="b v"><span class="z">۰</span></td><td class="y v"><span class="z">۰</span></td><td class="b v"><span class="z">۰</span></td><td class="b v"></td><td class="b v"><span class="z">۰</span></td><td class="b v"><span class="z">۰</span></td><td class="b v"></td><td class="y v"><span class="z">۰</span></td><td class="y v"><span class="z">۰</span></td><td class="y v"><span class="z">۰</span></td><td class="b v"></td><td class="b v"></td><td class="y v"><span class="z">۰</span></td><td class="b v"></td><td class="y v"></td><td class="y v"><span class="z">۰</span></td><td class="y v"><span class="z">۰</span></td><td class="y v"><span class="z">۰</span></td><td class="b v"></td><td class="b n v">(۱,<span class="z">۰</span><span class="z">۰</span><span class="z">۰</span>)</td><td class="y v">۱۶,<span class="z">۰</span><span class="z">۰</span><span class="z">۰</span>,<span class="z">۰</span><span class="z">۰</span><span class="z">۰</span></td><td class="b n v">(۱۶,<span class="z">۰</span><span class="z">۰</span><span class="z">۰</span>)</td><td class="st b"><span class="bs">تولید</span></td></tr>
</table>
</div>
<div id="wm" class="abs"><div id="wmt">@Codal360.ir</div></div>
</body>
</html>
